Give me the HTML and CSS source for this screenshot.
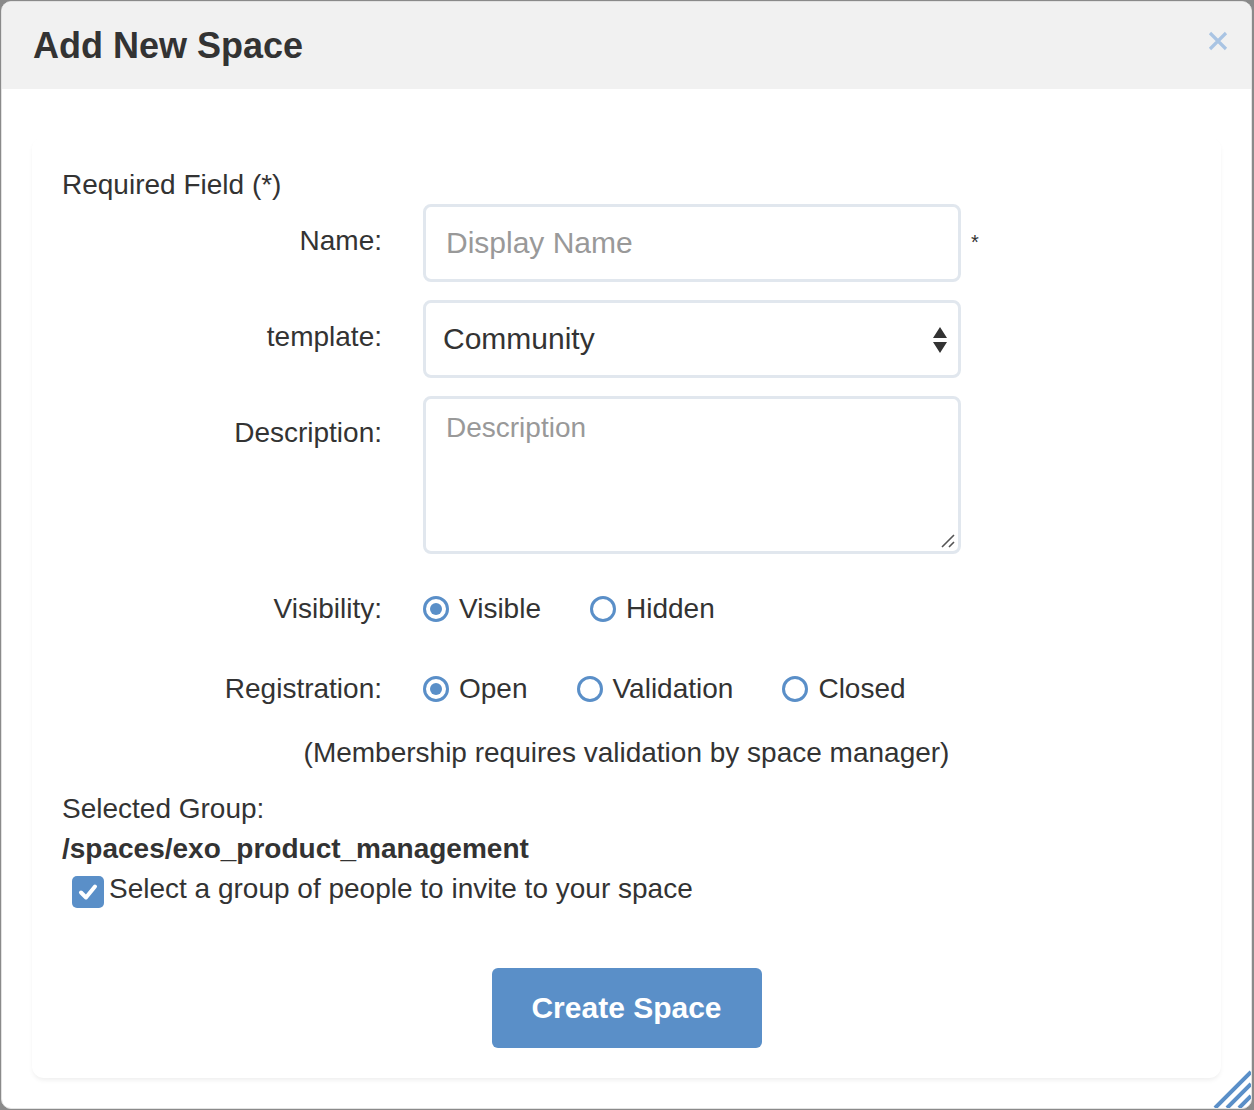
FILE: index.html
```html
<!DOCTYPE html>
<html>
<head>
<meta charset="utf-8">
<link rel="stylesheet" href="styles.css">
</head>
<body>
<div class="dialog">
  <div class="dialog-header">
    <h1 class="dialog-title">Add New Space</h1>
    <svg class="close" width="20" height="20" viewBox="0 0 20 20"><path d="M2 2 L18 18 M18 2 L2 18" stroke="#a9c4e3" stroke-width="3.2" stroke-linecap="butt"/></svg>
  </div>
  <div class="dialog-body">
    <div class="card">
      <div class="required">Required Field (*)</div>
      <div class="row">
        <div class="label">Name:</div>
        <div class="field input placeholder">Display Name</div>
        <div class="star">*</div>
      </div>
      <div class="row">
        <div class="label">template:</div>
        <div class="field input select">
          <span>Community</span>
          <svg class="arrows" width="16" height="28" viewBox="0 0 16 28"><path d="M1 12 L8 1 L15 12 Z M1 16 L15 16 L8 27 Z" fill="#333"/></svg>
        </div>
      </div>
      <div class="row">
        <div class="label">Description:</div>
        <div class="field textarea placeholder">Description
          <svg class="grip" width="16" height="16" viewBox="0 0 16 16"><path d="M2 14 L14 2 M9 14 L14 9" stroke="#555" stroke-width="1.6"/></svg>
        </div>
      </div>
      <div class="row radio-row vis">
        <div class="label">Visibility:</div>
        <div class="options">
          <div class="opt"><span class="radio checked"></span>Visible</div>
          <div class="opt"><span class="radio"></span>Hidden</div>
        </div>
      </div>
      <div class="row radio-row reg">
        <div class="label">Registration:</div>
        <div class="options">
          <div class="opt"><span class="radio checked"></span>Open</div>
          <div class="opt"><span class="radio"></span>Validation</div>
          <div class="opt"><span class="radio"></span>Closed</div>
        </div>
      </div>
      <div class="note">(Membership requires validation by space manager)</div>
      <div class="group-label">Selected Group:</div>
      <div class="group-path">/spaces/exo_product_management</div>
      <div class="check-row">
        <span class="checkbox"><svg width="20" height="18" viewBox="0 0 20 18"><path d="M3 9.5 L8 14.5 L17 3.5" stroke="#fff" stroke-width="4" fill="none" stroke-linecap="round" stroke-linejoin="round"/></svg></span>
        <span>Select a group of people to invite to your space</span>
      </div>
      <div class="actions">
        <div class="btn">Create Space</div>
      </div>
    </div>
  </div>
  <svg class="resize" width="38" height="38" viewBox="0 0 38 38"><path d="M2 38 L38 2 M14 38 L38 14 M26 38 L38 26" stroke="#5a8fc8" stroke-width="4"/></svg>
</div>
</body>
</html>
```

FILE: styles.css
```css
html, body {
  margin: 0;
  padding: 0;
}
body {
  background: #8a8a8a;
  font-family: "Liberation Sans", Arial, sans-serif;
  color: #333;
  width: 1254px;
  height: 1110px;
  overflow: hidden;
}
.dialog {
  position: relative;
  margin: 1px 2px 1px 1px;
  height: 1106px;
  border: 1px solid #e2e2e2;
  border-radius: 10px;
  background: #fff;
  overflow: hidden;
}
.dialog-header {
  height: 87px;
  background: #f1f1f1;
  display: flex;
  align-items: center;
  justify-content: space-between;
  padding: 0 23px 0 31px;
}
.dialog-title {
  margin: 0;
  font-size: 36px;
  font-weight: bold;
  color: #333;
}
.close {
  position: relative;
  top: -5px;
}
.dialog-body {
  padding: 48px 30px 0 30px;
}
.card {
  background: #fff;
  border-radius: 12px;
  box-shadow: 0 3px 5px -1px rgba(0,0,0,0.07);
  padding: 30px 30px 30px 30px;
  font-size: 28px;
  line-height: 36px;
}
.required {
  height: 36px;
  margin-bottom: 1px;
}
.row {
  display: flex;
  align-items: flex-start;
  margin-bottom: 18px;
}
.label {
  width: 320px;
  text-align: right;
  padding-top: 19px;
  margin-right: 41px;
  flex: none;
}
.field {
  box-sizing: border-box;
  width: 538px;
  border: 3px solid #e1e7ee;
  border-radius: 8px;
  background: #fff;
  font-size: 30px;
  padding: 0 20px;
}
.input {
  height: 78px;
  display: flex;
  align-items: center;
}
.placeholder {
  color: #999;
}
.select {
  justify-content: space-between;
  color: #333;
  padding-left: 17px;
  padding-right: 10px;
}
.arrows {
  position: relative;
  top: 1px;
}
.textarea {
  height: 158px;
  padding-top: 11px;
  position: relative;
  font-size: 28px;
  line-height: 36px;
}
.grip {
  position: absolute;
  right: 2px;
  bottom: 2px;
}
.star {
  margin-left: 10px;
  font-size: 20px;
  padding-top: 20px;
}
.radio-row .label {
  padding-top: 0;
}
.vis {
  margin-top: 37px;
  margin-bottom: 0;
}
.reg {
  margin-top: 44px;
  margin-bottom: 0;
}
.options {
  display: flex;
  gap: 49px;
}
.opt {
  display: flex;
  align-items: center;
  gap: 10px;
}
.radio {
  box-sizing: border-box;
  width: 26px;
  height: 26px;
  border: 3px solid #5a8fc8;
  border-radius: 50%;
  display: inline-flex;
  align-items: center;
  justify-content: center;
}
.radio.checked::after {
  content: "";
  width: 12px;
  height: 12px;
  border-radius: 50%;
  background: #5a8fc8;
}
.note {
  text-align: center;
  margin-top: 28px;
}
.group-label {
  margin-top: 18px;
  line-height: 40px;
}
.group-path {
  font-weight: bold;
  line-height: 40px;
}
.check-row {
  display: flex;
  align-items: center;
  line-height: 40px;
  padding-left: 10px;
  gap: 5px;
}
.checkbox {
  width: 32px;
  height: 32px;
  border-radius: 5px;
  background: #5a8fc8;
  display: inline-flex;
  align-items: center;
  justify-content: center;
  position: relative;
  top: 3px;
}
.actions {
  display: flex;
  justify-content: center;
  margin-top: 59px;
}
.btn {
  width: 270px;
  height: 80px;
  border-radius: 6px;
  background: #5a8fc8;
  color: #fff;
  font-weight: bold;
  font-size: 30px;
  display: flex;
  align-items: center;
  justify-content: center;
}
.resize {
  position: absolute;
  right: 0;
  bottom: 0;
}
```
